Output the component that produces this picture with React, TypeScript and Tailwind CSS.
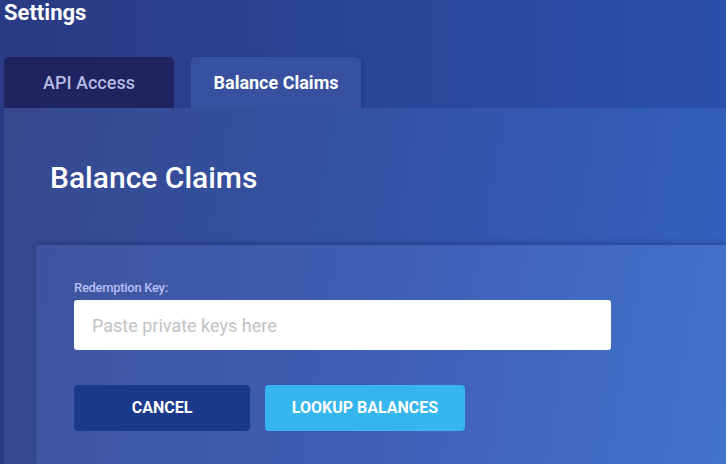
export default function App() {
  return (
    <div
      className="w-[726px] h-[464px] overflow-hidden flex flex-col bg-[linear-gradient(90deg,#2a3a84_0%,#2b4596_50%,#2a51ab_100%)] text-white"
      style={{ fontFamily: 'Roboto, "Liberation Sans", sans-serif' }}
    >
      <h1 className="h-[26px] pl-[4px] text-[22px] leading-[26px] font-bold">Settings</h1>

      <div className="mt-[31px] flex gap-[17px] pl-[4px]">
        <button className="w-[170px] h-[51px] rounded-t-[5px] bg-[#1f2360] text-[18px] font-medium text-[#b6bbe2]">
          API Access
        </button>
        <button className="w-[170px] h-[51px] rounded-t-[5px] bg-[#37509f] text-[18px] font-bold text-white shadow-[2px_0_3px_rgba(20,30,90,0.25)]">
          Balance Claims
        </button>
      </div>

      <div className="ml-[4px] flex-1 flex flex-col bg-[linear-gradient(100deg,#36488e_0%,#3452a3_45%,#3362c0_100%)]">
        <h2 className="pt-[52px] pl-[46px] text-[30px] leading-[36px] font-medium">Balance Claims</h2>

        <div className="mt-[49px] ml-[32px] flex-1 pt-[35px] pl-[38px] bg-[linear-gradient(100deg,#3f54a0_0%,#3f5fb4_50%,#4273cd_100%)] shadow-[0_-2px_5px_rgba(15,25,80,0.35)]">
          <label className="block text-[13px] leading-[16px] font-medium tracking-[-0.3px] text-[#b5bdf0]">Redemption Key:</label>
          <input
            className="mt-[4px] block w-[537px] h-[50px] rounded-[3px] bg-white px-[18px] text-[18px] text-gray-700 placeholder:text-[#c2c2c2] outline-none"
            placeholder="Paste private keys here"
          />
          <div className="mt-[35px] flex gap-[15px]">
            <button className="w-[176px] h-[46px] rounded-[4px] bg-[#1b3a8c] text-[16px] font-bold text-white">
              CANCEL
            </button>
            <button className="w-[200px] h-[46px] rounded-[4px] bg-[#36b6ee] text-[16px] font-bold text-white">
              LOOKUP BALANCES
            </button>
          </div>
        </div>
      </div>
    </div>
  );
}
